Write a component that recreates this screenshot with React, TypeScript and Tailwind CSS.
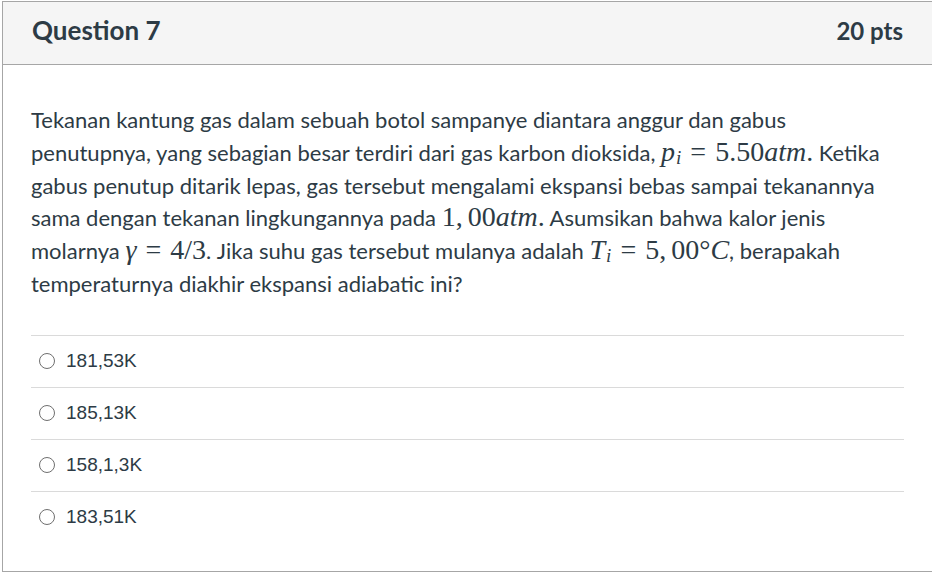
import React from "react";

const M = ({ children }: { children: React.ReactNode }) => (
  <span className="text-[28px] leading-none" style={{ fontFamily: '"Liberation Serif", "Times New Roman", serif' }}>
    {children}
  </span>
);
const I = ({ children }: { children: React.ReactNode }) => <i>{children}</i>;
const Eq = () => <span className="mx-[9px]">=</span>;
const Sub = ({ children }: { children: React.ReactNode }) => (
  <sub className="text-[19px] italic relative -bottom-[3px] leading-none align-baseline ml-[1px]">{children}</sub>
);

const answers = ["181,53K", "185,13K", "158,1,3K", "183,51K"];

export default function App() {
  return (
    <div className="bg-white min-h-[572px] pt-[1px]">
      <div
        className="ml-[2px] w-[931px] h-[571px] border border-[#a6a6a6] bg-white text-[#2d3b45]"
        style={{ fontFamily: 'Lato, "Noto Sans", sans-serif' }}
      >
        <div className="h-[63px] bg-[#f5f5f5] border-b border-[#a6a6a6] flex items-center justify-between px-[29px] pb-[5px]">
          <div className="text-[26px] font-bold">Question 7</div>
          <div className="text-[24px] font-bold">20 pts</div>
        </div>
        <div className="px-[28px] pt-[39px]">
          <p className="text-[22px] leading-[32.8px]">
            Tekanan kantung gas dalam sebuah botol sampanye diantara anggur dan gabus penutupnya, yang sebagian besar
            terdiri dari gas karbon dioksida,{" "}
            <M>
              <I>p</I>
              <Sub>i</Sub>
              <Eq />
              5.50<I>atm</I>.
            </M>{" "}
            Ketika gabus penutup ditarik lepas, gas tersebut mengalami ekspansi bebas sampai tekanannya sama dengan
            tekanan lingkungannya pada{" "}
            <M>
              1,<span className="ml-[5px]">00</span>
              <I>atm</I>.
            </M>{" "}
            Asumsikan bahwa kalor jenis molarnya{" "}
            <M>
              <I>γ</I>
              <Eq />
              4/3
            </M>
            . Jika suhu gas tersebut mulanya adalah{" "}
            <M>
              <I>T</I>
              <Sub>i</Sub>
              <Eq />
              5,<span className="ml-[5px]">00</span>°<I className="ml-[2px]">C</I>
            </M>
            , berapakah temperaturnya diakhir ekspansi adiabatic ini?
          </p>
          <div className="mt-[34px]">
            {answers.map((a) => (
              <div key={a} className="h-[52px] border-t border-[#dadada] flex items-center pl-[8px]">
                <span className="w-[16px] h-[16px] rounded-full border border-[#6f6f6f] bg-white shrink-0" />
                <span
                  className="ml-[11px] text-[19px] text-[#2d3b45]"
                  style={{ fontFamily: '"Liberation Sans", Arial, sans-serif' }}
                >
                  {a}
                </span>
              </div>
            ))}
          </div>
        </div>
      </div>
    </div>
  );
}
